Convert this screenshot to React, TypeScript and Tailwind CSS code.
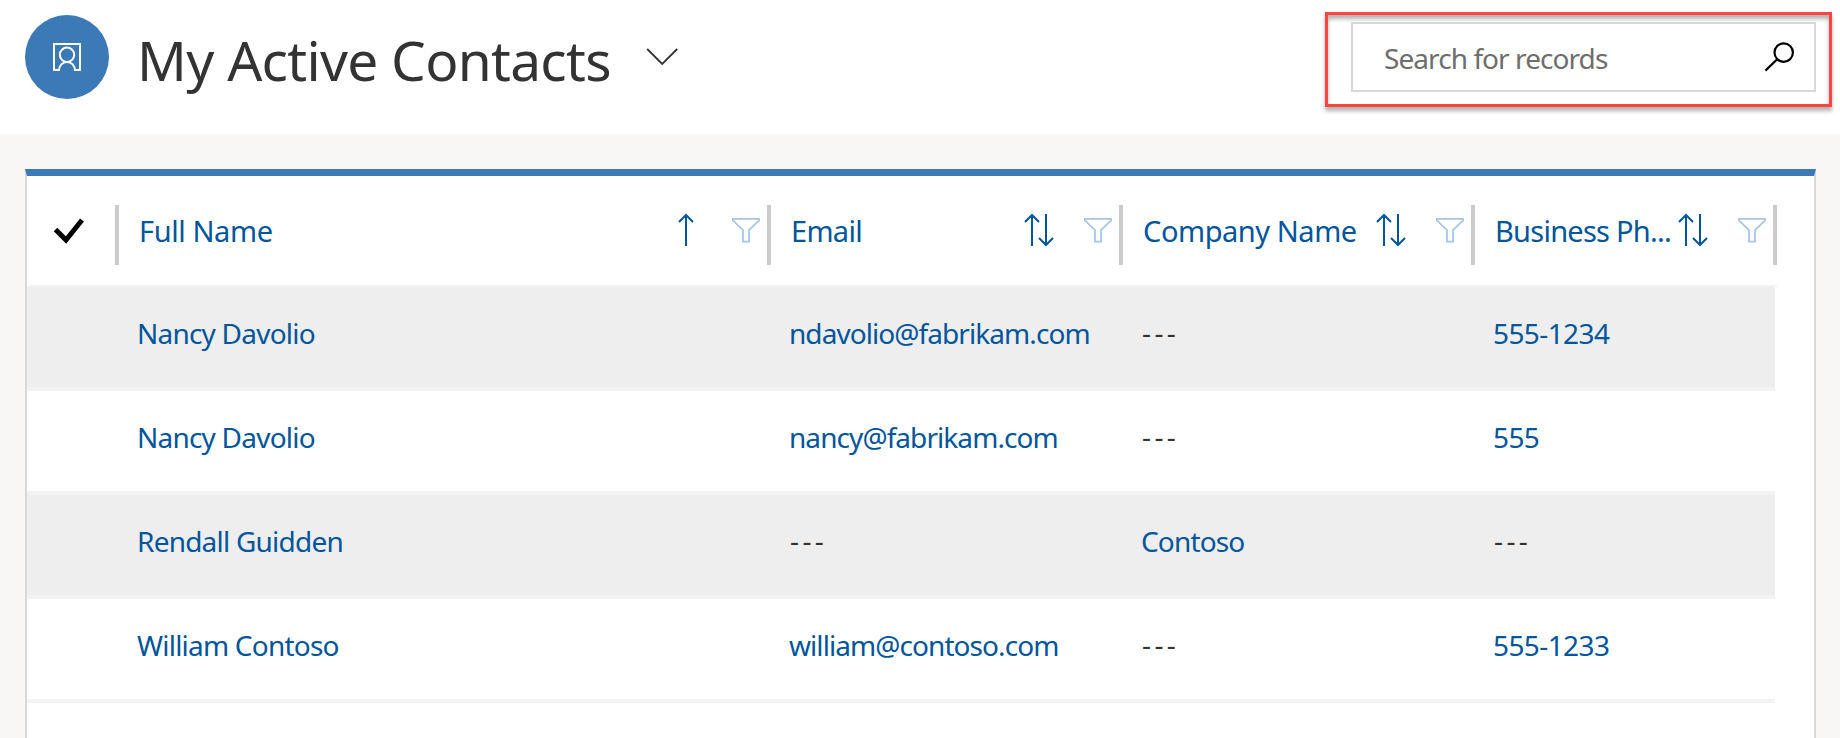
import React from "react";

type Cell = { text: string; link?: boolean };
const DASH: Cell = { text: "---" };
const rows: { name: string; email: Cell; company: Cell; phone: Cell }[] = [
  { name: "Nancy Davolio", email: { text: "ndavolio@fabrikam.com", link: true }, company: DASH, phone: { text: "555-1234", link: true } },
  { name: "Nancy Davolio", email: { text: "nancy@fabrikam.com", link: true }, company: DASH, phone: { text: "555", link: true } },
  { name: "Rendall Guidden", email: DASH, company: { text: "Contoso", link: true }, phone: DASH },
  { name: "William Contoso", email: { text: "william@contoso.com", link: true }, company: DASH, phone: { text: "555-1233", link: true } },
];

function ContactIcon() {
  return (
    <svg width="30" height="30" viewBox="0 0 30 30" fill="none" stroke="white" strokeWidth="2">
      <path d="M7 28H2V2H28V28H23" />
      <circle cx="15" cy="12.8" r="7.2" />
      <path d="M7 29C7 23.5 10.5 20 15 20S23 23.5 23 29" />
    </svg>
  );
}

function SortIcon({ both }: { both?: boolean }) {
  return (
    <svg className="shrink-0" width="30" height="34" viewBox="0 0 30 34" fill="none" stroke="#00559b" strokeWidth="2">
      <path d="M8 33V2M1 9L8 2L15 9" />
      {both && <path d="M22 1V32M15 25L22 32L29 25" />}
    </svg>
  );
}

function FilterIcon() {
  return (
    <svg className="shrink-0" width="28" height="26" viewBox="0 0 28 26" fill="none" stroke="#a8c6e0" strokeWidth="1.8">
      <path d="M.9 1.9H27.1V3.4L17 13.2V24.6H11V13.2L.9 3.4Z" />
    </svg>
  );
}

function HeaderCell({ label, both, className, labelClass }: { label: string; both?: boolean; className: string; labelClass: string }) {
  return (
    <div className={`flex h-[60px] shrink-0 items-center border-r-4 border-[#cbcbcb] pr-[7px] pl-[20px] text-[29px] text-[#00559b] ${className}`}>
      <span className={`min-w-0 flex-1 pb-[9px] whitespace-nowrap ${labelClass}`}>{label}</span>
      <div className={`flex items-center pb-[10px] ${both ? "gap-[30px]" : "gap-[24px]"}`}>
        <SortIcon both={both} />
        <FilterIcon />
      </div>
    </div>
  );
}

function Value({ cell, className }: { cell: Cell; className: string }) {
  return cell.link ? (
    <div className={`shrink-0 whitespace-nowrap text-[#00559b] ${className}`}>{cell.text}</div>
  ) : (
    <div className={`-mt-px shrink-0 pl-px whitespace-nowrap text-[#333] ${className}`}>
      <span className="tracking-[3.4px]">{cell.text}</span>
    </div>
  );
}

export default function App() {
  return (
    <div className="flex h-[738px] w-[1840px] flex-col overflow-hidden bg-[#f8f7f5] font-['Noto_Sans','Open_Sans',sans-serif]">
      <header className="flex h-[134px] shrink-0 items-start bg-white">
        <div className="mt-[15px] ml-[25px] flex size-[84px] items-center justify-center rounded-full bg-[#3b79b7]">
          <ContactIcon />
        </div>
        <h1 className="mt-[20px] ml-[28px] w-[500px] text-[55px] leading-[80px] tracking-[-0.7px] whitespace-nowrap text-[#333]">My Active Contacts</h1>
        <svg className="mt-[47px] ml-[9px]" width="34" height="20" viewBox="0 0 34 20" fill="none" stroke="#333" strokeWidth="1.8">
          <path d="M1.2 2L16.2 17L31.2 2" />
        </svg>
        <div className="mt-[12px] mr-[8px] ml-auto h-[95px] w-[507px] border-[3px] border-[#ff4343] pt-[7px] pl-[23px] shadow-[0_4px_4px_rgba(0,0,0,0.3),inset_0_4px_4px_rgba(0,0,0,0.3)]">
          <div className="flex h-[70px] w-[465px] items-center justify-between border-2 border-[#d8d8d8] pr-[20px] pl-[31px]">
            <span className="pt-[2px] text-[28px] tracking-[-0.93px] text-[#6e6e6e]">Search for records</span>
            <svg width="31" height="30" viewBox="0 0 31 30" fill="none" stroke="black" strokeWidth="2.2">
              <circle cx="20.7" cy="10.6" r="9.2" />
              <path d="M14.2 17.2L2.4 28.6" />
            </svg>
          </div>
        </div>
      </header>
      <main className="mt-[35px] ml-[25px] flex w-[1791px] flex-1 flex-col border-x-2 border-t-[7px] border-x-[#d8d8d8] border-t-[#3b79b7] bg-white">
        <div className="flex h-[109px] shrink-0 items-start pt-[29px]">
          <div className="flex h-[60px] w-[92px] shrink-0 items-center border-r-4 border-[#cbcbcb] pb-[8px] pl-[27px]">
            <svg width="30" height="26" viewBox="0 0 30 26" fill="none" stroke="black" strokeWidth="5">
              <path d="M1.5 11.5L12 22L28 2" />
            </svg>
          </div>
          <HeaderCell label="Full Name" className="w-[652px]" labelClass="tracking-[-0.4px]" />
          <HeaderCell label="Email" both className="w-[352px]" labelClass="tracking-[-0.7px]" />
          <HeaderCell label="Company Name" both className="w-[352px]" labelClass="tracking-[-0.45px]" />
          <HeaderCell label="Business Ph..." both className="w-[302px]" labelClass="tracking-[-0.75px]" />
        </div>
        <div className="ml-[2px] h-[2px] w-[1748px] shrink-0 bg-[#f3f3f3]" />
        {rows.map((r, i) => (
          <div key={i} className={`flex h-[104px] w-[1748px] shrink-0 border-b-4 border-[#f3f3f3] pt-[26px] pl-[110px] text-[28px] leading-[40px] ${i % 2 ? "bg-white" : "bg-[#eeeeee]"}`}>
            <div className="w-[652px] shrink-0 tracking-[-0.78px] whitespace-nowrap text-[#00559b]">{r.name}</div>
            <Value cell={r.email} className="w-[352px] tracking-[-0.93px]" />
            <Value cell={r.company} className="w-[352px] tracking-[-0.84px]" />
            <Value cell={r.phone} className="w-[252px] tracking-[-0.6px]" />
          </div>
        ))}
      </main>
    </div>
  );
}
